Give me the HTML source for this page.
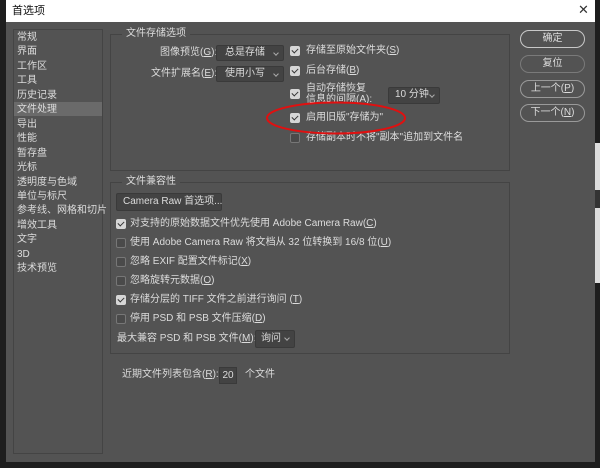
<!DOCTYPE html>
<html><head><meta charset="utf-8"><style>
*{margin:0;padding:0;box-sizing:border-box}
body{width:600px;height:468px;background:#1e1e1e;position:relative;overflow:hidden;font-family:"Liberation Sans","Noto Sans CJK SC",sans-serif;font-size:10px;color:#dcdcdc}
.a{position:absolute;white-space:nowrap}
.t{position:absolute;white-space:nowrap;line-height:12px}
.cb{position:absolute;width:10px;height:10px;border-radius:2px;background:#d6d6d6}
.cb::after{content:"";position:absolute;left:3px;top:1px;width:3px;height:5px;border:solid #333;border-width:0 1.6px 1.6px 0;transform:rotate(45deg)}
.un{position:absolute;width:10px;height:10px;border-radius:2px;border:1px solid #777;background:#4a4a4a}
.dd{position:absolute;background:#434343;border:1px solid #3a3a3a;border-radius:2px;line-height:14px;padding-left:8px}
.dd::after{content:"";position:absolute;right:5px;top:5px;width:3px;height:3px;border:solid #aaa;border-width:0 1px 1px 0;transform:rotate(45deg)}
.btn{position:absolute;left:520px;width:65px;height:18px;border:1px solid #9a9a9a;border-radius:9px;text-align:center;line-height:16px}
.grp{position:absolute;border:1px solid #444;}
</style></head><body>
<div class="a" style="left:6px;top:0;width:589px;height:22px;background:#fff"></div>
<div class="t" style="left:12px;top:5px;color:#111;font-size:11px">首选项</div>
<div class="t" style="left:578px;top:4px;color:#333;font-size:13px">✕</div>
<div class="a" style="left:6px;top:22px;width:589px;height:440px;background:#535353"></div>
<div class="a" style="left:595px;top:143px;width:5px;height:140px;background:#ddd"></div>
<div class="a" style="left:595px;top:190px;width:5px;height:18px;background:#333"></div>

<div class="a" style="left:13px;top:29px;width:90px;height:425px;border:1px solid #444"></div>
<div class="a" style="left:14px;top:102px;width:88px;height:14px;background:#6a6a6a"></div>
<div class="t" style="left:17px;top:31px;line-height:14.45px">常规<br>界面<br>工作区<br>工具<br>历史记录<br>文件处理<br>导出<br>性能<br>暂存盘<br>光标<br>透明度与色域<br>单位与标尺<br>参考线、网格和切片<br>增效工具<br>文字<br>3D<br>技术预览</div>

<div class="grp" style="left:110px;top:34px;width:400px;height:137px"></div>
<div class="t" style="left:122px;top:28px;background:#535353;padding:0 4px">文件存储选项</div>
<div class="t" style="left:160px;top:47px">图像预览(<u>G</u>):</div>
<div class="dd" style="left:216px;top:45px;width:68px;height:16px">总是存储</div>
<div class="t" style="left:151px;top:68px">文件扩展名(<u>E</u>):</div>
<div class="dd" style="left:216px;top:66px;width:68px;height:16px">使用小写</div>
<div class="cb" style="left:290px;top:46px"></div><div class="t" style="left:306px;top:45px">存储至原始文件夹(<u>S</u>)</div>
<div class="cb" style="left:290px;top:66px"></div><div class="t" style="left:306px;top:65px">后台存储(<u>B</u>)</div>
<div class="cb" style="left:290px;top:89px"></div><div class="t" style="left:306px;top:83px;line-height:11px">自动存储恢复<br>信息的间隔(A):</div>
<div class="dd" style="left:388px;top:87px;width:52px;height:17px;padding-left:6px">10 分钟</div>
<div class="cb" style="left:290px;top:113px"></div><div class="t" style="left:306px;top:112px">启用旧版"存储为"</div>
<div class="un" style="left:290px;top:133px"></div><div class="t" style="left:306px;top:132px">存储副本时不将"副本"追加到文件名</div>
<svg class="a" style="left:264px;top:100px" width="144" height="36"><ellipse cx="72" cy="18" rx="69" ry="15.5" fill="none" stroke="#e01010" stroke-width="2"/></svg>

<div class="grp" style="left:110px;top:182px;width:400px;height:172px"></div>
<div class="t" style="left:122px;top:176px;background:#535353;padding:0 4px">文件兼容性</div>
<div class="a" style="left:116px;top:193px;width:106px;height:18px;background:#434343;border:1px solid #3a3a3a;border-radius:2px;line-height:16px;padding-left:6px">Camera Raw 首选项...</div>
<div class="cb" style="left:116px;top:219px"></div><div class="t" style="left:130px;top:218px">对支持的原始数据文件优先使用 Adobe Camera Raw(<u>C</u>)</div>
<div class="un" style="left:116px;top:238px"></div><div class="t" style="left:130px;top:237px">使用 Adobe Camera Raw 将文档从 32 位转换到 16/8 位(<u>U</u>)</div>
<div class="un" style="left:116px;top:257px"></div><div class="t" style="left:130px;top:256px">忽略 EXIF 配置文件标记(<u>X</u>)</div>
<div class="un" style="left:116px;top:276px"></div><div class="t" style="left:130px;top:275px">忽略旋转元数据(<u>O</u>)</div>
<div class="cb" style="left:116px;top:295px"></div><div class="t" style="left:130px;top:294px">存储分层的 TIFF 文件之前进行询问 (<u>T</u>)</div>
<div class="un" style="left:116px;top:314px"></div><div class="t" style="left:130px;top:313px">停用 PSD 和 PSB 文件压缩(<u>D</u>)</div>
<div class="t" style="left:117px;top:333px">最大兼容 PSD 和 PSB 文件(<u>M</u>):</div>
<div class="dd" style="left:255px;top:330px;width:40px;height:18px;line-height:16px;padding-left:5px">询问</div>
<div class="t" style="left:122px;top:369px">近期文件列表包含(<u>R</u>):</div>
<div class="a" style="left:219px;top:367px;width:18px;height:17px;background:#434343;border:1px solid #3a3a3a;line-height:15px;text-align:center">20</div>
<div class="t" style="left:245px;top:369px">个文件</div>

<div class="btn" style="top:30px;border-color:#c8c8c8">确定</div>
<div class="btn" style="top:55px;border-color:#7a7a7a">复位</div>
<div class="btn" style="top:80px">上一个(<u>P</u>)</div>
<div class="btn" style="top:104px">下一个(<u>N</u>)</div>
</body></html>
